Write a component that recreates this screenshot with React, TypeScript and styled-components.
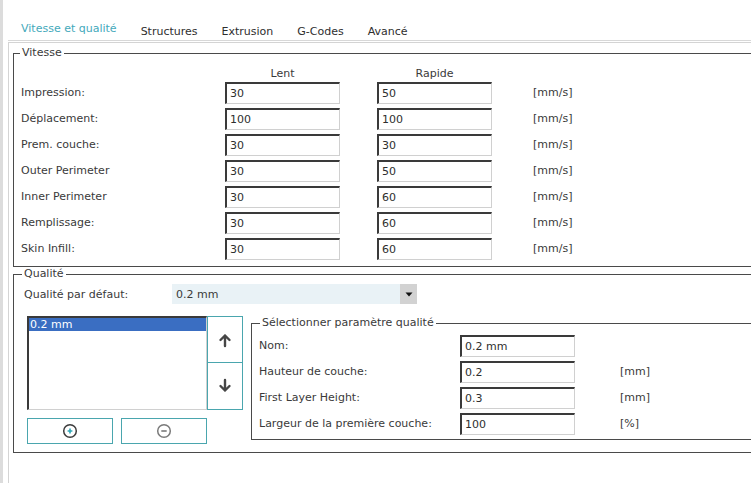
import { Fragment } from "react";
import styled, { createGlobalStyle } from "styled-components";

const GlobalStyle = createGlobalStyle`
  html, body {
    margin: 0;
    padding: 0;
    background: #ffffff;
    overflow: hidden;
  }
  body {
    font-family: "DejaVu Sans", "Noto Sans", sans-serif;
    font-size: 11px;
    color: #3a3a3a;
  }
`;

const Window = styled.div`
  width: 800px;
  height: 483px;
  border-left: 3px solid #dcdcdc;
  padding-left: 5px;
  box-sizing: border-box;
  display: flex;
  flex-direction: column;
`;

const TabBar = styled.div`
  height: 41px;
  box-sizing: border-box;
  display: flex;
  align-items: flex-end;
  padding-left: 1px;
  border-bottom: 1px solid #d8d8d8;
`;

const Tab = styled.div<{ $active?: boolean }>`
  padding: 0 12px ${(p) => (p.$active ? "4px" : "1px")};
  line-height: 14px;
  font-size: 11px;
  color: ${(p) => (p.$active ? "#44a9bb" : "#2e2e2e")};
  white-space: nowrap;
`;

const Pane = styled.div`
  flex: 1;
  margin-top: 1px;
  border-top: 1px solid #d4d4d4;
  border-left: 1px solid #d4d4d4;
  padding: 0 0 0 4px;
  display: flex;
  flex-direction: column;
`;

const Group = styled.fieldset<{ $top?: number }>`
  margin: ${(p) => p.$top ?? 0}px 0 0 0;
  padding: 0;
  border: 1px solid #4a4a4a;
  min-width: 0;
`;

const Legend = styled.legend<{ $offset: number }>`
  margin-left: ${(p) => p.$offset}px;
  padding: 0 2px;
  line-height: 12px;
  font-size: 11px;
  color: #3a3a3a;
`;

const SpeedGrid = styled.div`
  display: grid;
  grid-template-columns: 204px 152px 156px 1fr;
  grid-template-rows: 16px repeat(7, 26px);
  padding: 5px 0 4px 7px;
  align-items: center;
`;

const ColHead = styled.div`
  width: 115px;
  text-align: center;
  line-height: 14px;
  align-self: end;
  margin-bottom: -1px;
`;

const Label = styled.div`
  line-height: 14px;
  white-space: nowrap;
`;

const Field = styled.div`
  width: 115px;
  height: 22px;
  box-sizing: border-box;
  border-top: 2px solid #3a3a3a;
  border-left: 2px solid #3a3a3a;
  border-right: 1px solid #d0d0d0;
  border-bottom: 1px solid #d0d0d0;
  padding-left: 3px;
  display: flex;
  align-items: center;
  background: #ffffff;
  color: #2e2e2e;
`;

const Unit = styled.div`
  line-height: 14px;
`;

const QualityBody = styled.div`
  padding: 4px 0 8px 10px;
  display: flex;
  flex-direction: column;
`;

const ComboRow = styled.div`
  display: flex;
  align-items: center;
  height: 20px;
`;

const ComboLabel = styled.div`
  width: 148px;
`;

const Combo = styled.div`
  width: 245px;
  height: 20px;
  display: flex;
  background: #e9f2f6;
`;

const ComboText = styled.div`
  flex: 1;
  padding-left: 4px;
  display: flex;
  align-items: center;
`;

const ComboArrow = styled.div`
  width: 17px;
  background: #d2d2d2;
  display: flex;
  align-items: center;
  justify-content: center;
`;

const Lower = styled.div`
  display: flex;
  margin-top: 12px;
  padding-left: 3px;
`;

const ListColumn = styled.div`
  display: flex;
  flex-direction: column;
  gap: 8px;
`;

const ListRow = styled.div`
  display: flex;
`;

const ListBox = styled.div`
  width: 180px;
  height: 94px;
  box-sizing: border-box;
  border-top: 2px solid #3a3a3a;
  border-left: 2px solid #3a3a3a;
  border-right: 1px solid #d0d0d0;
  border-bottom: 1px solid #d0d0d0;
  background: #ffffff;
`;

const ListItem = styled.div<{ $selected?: boolean }>`
  height: 13px;
  line-height: 13px;
  padding-left: 1px;
  background: ${(p) => (p.$selected ? "#3a6ec2" : "transparent")};
  color: ${(p) => (p.$selected ? "#ffffff" : "#333333")};
`;

const MoveButtons = styled.div`
  display: flex;
  flex-direction: column;
  width: 36px;
`;

const MoveButton = styled.div`
  height: 47px;
  box-sizing: border-box;
  border: 1px solid #4aa6ae;
  display: flex;
  align-items: center;
  justify-content: center;
  background: #ffffff;

  & + & {
    border-top: none;
  }
`;

const ButtonRow = styled.div`
  display: flex;
  gap: 8px;
`;

const ActionButton = styled.div`
  width: 86px;
  height: 26px;
  box-sizing: border-box;
  border: 1px solid #4aa6ae;
  display: flex;
  align-items: center;
  justify-content: center;
  background: #ffffff;
`;

const SubGroup = styled.fieldset`
  flex: 1;
  margin: 1px 0 0 8px;
  padding: 0;
  border: 1px solid #4a4a4a;
  border-right: none;
  min-width: 0;
  align-self: flex-start;
`;

const ParamGrid = styled.div`
  display: grid;
  grid-template-columns: 201px 160px 1fr;
  grid-template-rows: repeat(4, 26px);
  align-items: center;
  padding: 4px 0 2px 7px;
`;

const UpArrow = () => (
  <svg width="16" height="16" viewBox="0 0 16 16">
    <path
      d="M8 14 V3.5 M3.5 8 L8 3.5 L12.5 8"
      fill="none"
      stroke="#464646"
      strokeWidth="2.4"
      strokeLinecap="round"
      strokeLinejoin="round"
    />
  </svg>
);

const DownArrow = () => (
  <svg width="16" height="16" viewBox="0 0 16 16">
    <path
      d="M8 2 V12.5 M3.5 8 L8 12.5 L12.5 8"
      fill="none"
      stroke="#464646"
      strokeWidth="2.4"
      strokeLinecap="round"
      strokeLinejoin="round"
    />
  </svg>
);

const PlusCircle = () => (
  <svg width="16" height="16" viewBox="0 0 16 16">
    <circle cx="8" cy="8" r="6.3" fill="none" stroke="#3c3c3c" strokeWidth="1.5" />
    <path d="M8 5.6 V10.4 M5.6 8 H10.4" stroke="#2fa6b6" strokeWidth="1.6" />
  </svg>
);

const MinusCircle = () => (
  <svg width="16" height="16" viewBox="0 0 16 16">
    <circle cx="8" cy="8" r="6.3" fill="none" stroke="#7a7a7a" strokeWidth="1.5" />
    <path d="M5.3 8 H10.7" stroke="#7a7a7a" strokeWidth="1.6" />
  </svg>
);

const DropArrow = () => (
  <svg width="8" height="5" viewBox="0 0 8 5">
    <path d="M0.5 0.5 H7.5 L4 4.5 Z" fill="#111111" />
  </svg>
);

const speeds = [
  { label: "Impression:", slow: "30", fast: "50" },
  { label: "Déplacement:", slow: "100", fast: "100" },
  { label: "Prem. couche:", slow: "30", fast: "30" },
  { label: "Outer Perimeter", slow: "30", fast: "50" },
  { label: "Inner Perimeter", slow: "30", fast: "60" },
  { label: "Remplissage:", slow: "30", fast: "60" },
  { label: "Skin Infill:", slow: "30", fast: "60" },
];

const params = [
  { label: "Nom:", value: "0.2 mm", unit: "" },
  { label: "Hauteur de couche:", value: "0.2", unit: "[mm]" },
  { label: "First Layer Height:", value: "0.3", unit: "[mm]" },
  { label: "Largeur de la première couche:", value: "100", unit: "[%]" },
];

const tabs = ["Vitesse et qualité", "Structures", "Extrusion", "G-Codes", "Avancé"];

export default function App() {
  return (
    <>
      <GlobalStyle />
      <Window>
        <TabBar>
          {tabs.map((t, i) => (
            <Tab key={t} $active={i === 0}>
              {t}
            </Tab>
          ))}
        </TabBar>
        <Pane>
          <Group $top={4}>
            <Legend $offset={6}>Vitesse</Legend>
            <SpeedGrid>
              <div />
              <ColHead>Lent</ColHead>
              <ColHead>Rapide</ColHead>
              <div />
              {speeds.map((s) => (
                <Fragment key={s.label}>
                  <Label>{s.label}</Label>
                  <Field>{s.slow}</Field>
                  <Field>{s.fast}</Field>
                  <Unit>[mm/s]</Unit>
                </Fragment>
              ))}
            </SpeedGrid>
          </Group>
          <Group $top={1}>
            <Legend $offset={8}>Qualité</Legend>
            <QualityBody>
              <ComboRow>
                <ComboLabel>Qualité par défaut:</ComboLabel>
                <Combo>
                  <ComboText>0.2 mm</ComboText>
                  <ComboArrow>
                    <DropArrow />
                  </ComboArrow>
                </Combo>
              </ComboRow>
              <Lower>
                <ListColumn>
                  <ListRow>
                    <ListBox>
                      <ListItem $selected>0.2 mm</ListItem>
                    </ListBox>
                    <MoveButtons>
                      <MoveButton>
                        <UpArrow />
                      </MoveButton>
                      <MoveButton>
                        <DownArrow />
                      </MoveButton>
                    </MoveButtons>
                  </ListRow>
                  <ButtonRow>
                    <ActionButton>
                      <PlusCircle />
                    </ActionButton>
                    <ActionButton>
                      <MinusCircle />
                    </ActionButton>
                  </ButtonRow>
                </ListColumn>
                <SubGroup>
                  <Legend $offset={8}>Sélectionner paramètre qualité</Legend>
                  <ParamGrid>
                    {params.map((p) => (
                      <Fragment key={p.label}>
                        <Label>{p.label}</Label>
                        <Field>{p.value}</Field>
                        <Unit>{p.unit}</Unit>
                      </Fragment>
                    ))}
                  </ParamGrid>
                </SubGroup>
              </Lower>
            </QualityBody>
          </Group>
        </Pane>
      </Window>
    </>
  );
}
